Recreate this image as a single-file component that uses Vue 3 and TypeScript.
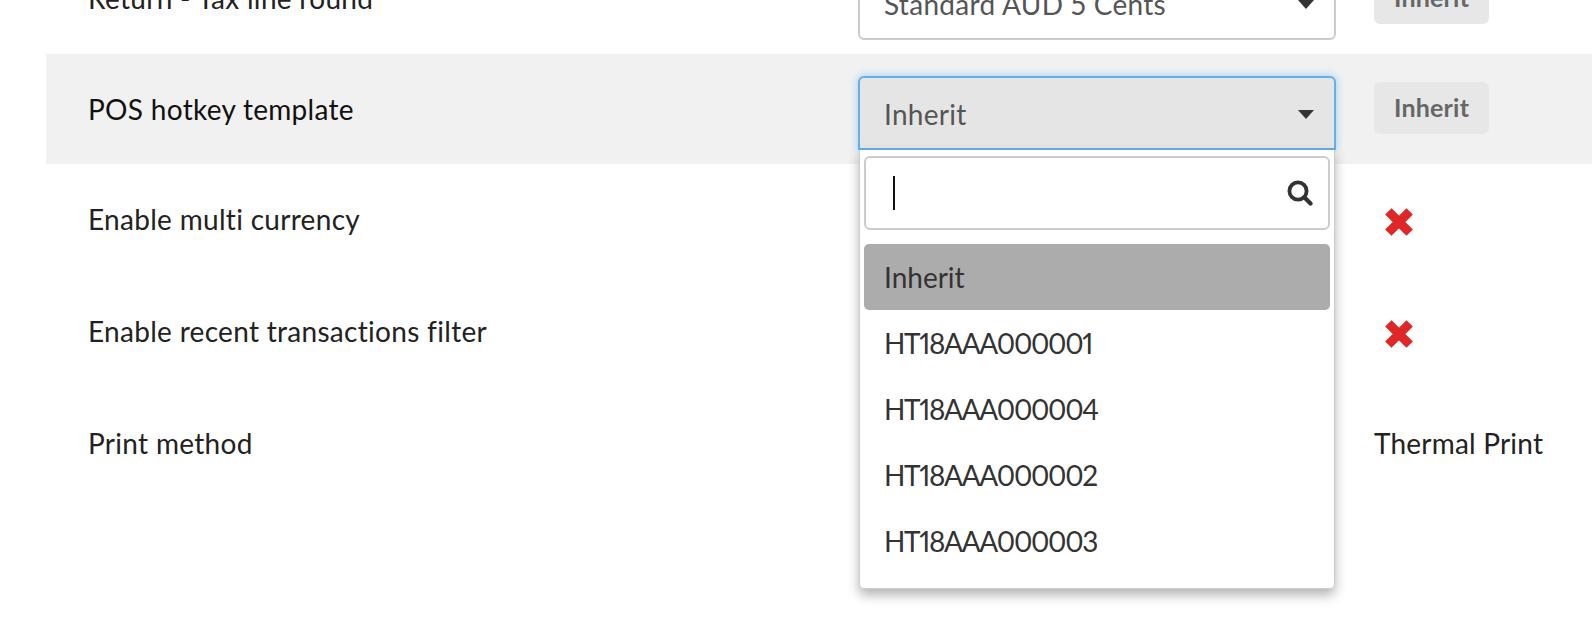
<script setup lang="ts">
interface Row {
  label: string
  kind: 'select' | 'cross' | 'text' | 'open'
  value?: string
  badge?: string
}
const rows: Row[] = [
  { label: 'Return - Tax line round', kind: 'select', value: 'Standard AUD 5 Cents', badge: 'Inherit' },
  { label: 'POS hotkey template', kind: 'open', value: 'Inherit', badge: 'Inherit' },
  { label: 'Enable multi currency', kind: 'cross' },
  { label: 'Enable recent transactions filter', kind: 'cross' },
  { label: 'Print method', kind: 'text', value: 'Thermal Print' },
]
const options = ['Inherit', 'HT18AAA000001', 'HT18AAA000004', 'HT18AAA000002', 'HT18AAA000003']
</script>

<template>
  <div class="viewport">
    <div class="table">
      <div v-for="r in rows" :key="r.label" class="row" :class="{ hot: r.kind === 'open', top: r.kind === 'select' }">
        <div class="label">{{ r.label }}</div>
        <div class="control">
          <div v-if="r.kind === 'select' || r.kind === 'open'" class="select" :class="{ open: r.kind === 'open' }">
            <span>{{ r.value }}</span>
            <i class="caret"></i>
          </div>
          <div v-if="r.kind === 'open'" class="menu">
            <div class="search">
              <i class="cursor"></i>
              <svg class="glass" viewBox="0 0 26 26" width="26" height="26">
                <circle cx="11" cy="11" r="8.6" fill="none" stroke="#333" stroke-width="3.8" />
                <path d="M17.5 17.5 L23.5 23.5" stroke="#333" stroke-width="4.2" stroke-linecap="round" />
              </svg>
            </div>
            <ul class="options">
              <li v-for="(o, i) in options" :key="o" :class="i === 0 ? 'active' : 'code'">{{ o }}</li>
            </ul>
          </div>
        </div>
        <div class="state">
          <span v-if="r.badge" class="badge">{{ r.badge }}</span>
          <svg v-else-if="r.kind === 'cross'" class="cross" viewBox="0 0 28 28" width="28" height="28">
            <path d="M6.5 6.5 L21.5 21.5 M21.5 6.5 L6.5 21.5" stroke="#e02727" stroke-width="9" stroke-linecap="square" />
          </svg>
          <span v-else class="plain">{{ r.value }}</span>
        </div>
      </div>
    </div>
  </div>
</template>

<style>
html, body { margin: 0; background: #fff; }
</style>

<style scoped>
.viewport {
  width: 1592px;
  height: 634px;
  overflow: hidden;
  font-family: Lato, "Noto Sans", sans-serif;
  font-variant-ligatures: none;
  font-variant-numeric: proportional-nums;
  color: #222;
}
.table {
  margin-top: -56px;
  margin-left: 46px;
}
.row {
  display: grid;
  grid-template-columns: 812px 478px 1fr;
  height: 112px;
  align-items: center;
}
.row.top,
.row.hot {
  height: 110px;
}
.row.hot { background: #f1f1f1; }
.label {
  padding-left: 42px;
  font-size: 28px;
  letter-spacing: 0.3px;
}
.row:not(.hot) .label { margin-top: -2px; }
.hot .label { color: #111; }
.control {
  position: relative;
  align-self: start;
  padding-top: 22px;
}
.state { padding-left: 38px; display: flex; align-items: center; }
.select {
  box-sizing: border-box;
  height: 74px;
  border: 2px solid #ccc;
  border-radius: 6px;
  background: #fff;
  display: flex;
  align-items: center;
  justify-content: space-between;
  padding: 2px 20px 0 24px;
  font-size: 28px;
  letter-spacing: 0.3px;
  color: #555;
}
.select.open {
  background: #e5e5e5;
  border-color: #66afe9;
  border-radius: 6px 6px 0 0;
  box-shadow: 0 0 8px rgba(102, 175, 233, 0.6);
}
.caret {
  width: 0;
  height: 0;
  margin-top: 1px;
  border-left: 8px solid transparent;
  border-right: 8px solid transparent;
  border-top: 9px solid #333;
}
.menu {
  position: absolute;
  left: 1px;
  right: 1px;
  top: 96px;
  height: 439px;
  box-sizing: border-box;
  padding: 6px 4px 7px;
  background: #fff;
  border: 1px solid #ccc;
  border-top: 0;
  border-radius: 0 0 5px 5px;
  box-shadow: 0 6px 12px rgba(0, 0, 0, 0.3);
  z-index: 2;
}
.search {
  box-sizing: border-box;
  height: 74px;
  border: 2px solid #ccc;
  border-radius: 6px;
  display: flex;
  align-items: center;
  justify-content: space-between;
  padding: 0 15px 0 27px;
}
.cursor { width: 2px; height: 34px; background: #111; }
.glass { display: block; }
.options {
  list-style: none;
  margin: 14px 0 0;
  padding: 0;
}
.options li {
  height: 66px;
  display: flex;
  align-items: center;
  padding-left: 20px;
  font-size: 28px;
  color: #333;
  border-radius: 5px;
}
.options li.code { letter-spacing: -1.35px; }
.options li.active { background: #acacac; }
.badge {
  display: inline-block;
  margin-top: -2px;
  padding: 0 20px 2px;
  line-height: 50px;
  background: #e7e7e7;
  border-radius: 6px;
  font-size: 25px;
  letter-spacing: 0.2px;
  font-weight: 700;
  color: #666;
}
.cross { display: block; margin-left: 11px; margin-top: 4px; }
.plain { font-size: 28px; letter-spacing: 0.2px; margin-top: -2px; }
</style>
